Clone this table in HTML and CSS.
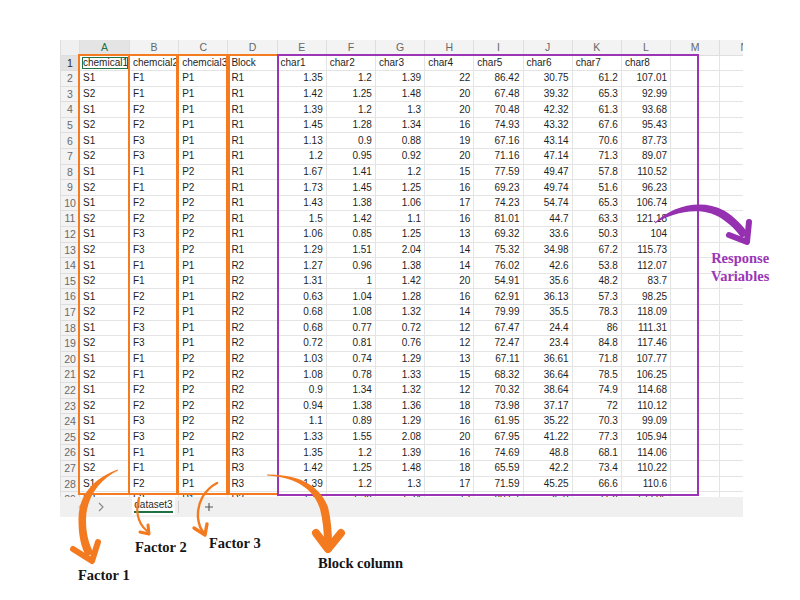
FILE: index.html
```html
<!DOCTYPE html>
<html lang="en">
<head>
<meta charset="utf-8">
<title>dataset3</title>
<link rel="stylesheet" href="styles.css">
</head>
<body>
<div class="sheet">
  <div class="grid-wrap">
    <table class="grid">
      <colgroup>
        <col class="c-rh"><col class="c-a"><col><col><col><col><col><col><col><col><col><col><col><col><col>
      </colgroup>
      <thead>
        <tr><th class="corner"></th><th class="csel">A</th><th>B</th><th>C</th><th>D</th><th>E</th><th>F</th><th>G</th><th>H</th><th>I</th><th>J</th><th>K</th><th>L</th><th>M</th><th>N</th></tr>
      </thead>
      <tbody>
        <tr class="r1"><th>1</th><td class="sel">chemical1</td><td>chemcial2</td><td>chemcial3</td><td>Block</td><td>char1</td><td>char2</td><td>char3</td><td>char4</td><td>char5</td><td>char6</td><td>char7</td><td>char8</td><td></td><td></td></tr>
        <tr><th>2</th><td>S1</td><td>F1</td><td>P1</td><td>R1</td><td>1.35</td><td>1.2</td><td>1.39</td><td>22</td><td>86.42</td><td>30.75</td><td>61.2</td><td>107.01</td><td></td><td></td></tr>
        <tr><th>3</th><td>S2</td><td>F1</td><td>P1</td><td>R1</td><td>1.42</td><td>1.25</td><td>1.48</td><td>20</td><td>67.48</td><td>39.32</td><td>65.3</td><td>92.99</td><td></td><td></td></tr>
        <tr><th>4</th><td>S1</td><td>F2</td><td>P1</td><td>R1</td><td>1.39</td><td>1.2</td><td>1.3</td><td>20</td><td>70.48</td><td>42.32</td><td>61.3</td><td>93.68</td><td></td><td></td></tr>
        <tr><th>5</th><td>S2</td><td>F2</td><td>P1</td><td>R1</td><td>1.45</td><td>1.28</td><td>1.34</td><td>16</td><td>74.93</td><td>43.32</td><td>67.6</td><td>95.43</td><td></td><td></td></tr>
        <tr><th>6</th><td>S1</td><td>F3</td><td>P1</td><td>R1</td><td>1.13</td><td>0.9</td><td>0.88</td><td>19</td><td>67.16</td><td>43.14</td><td>70.6</td><td>87.73</td><td></td><td></td></tr>
        <tr><th>7</th><td>S2</td><td>F3</td><td>P1</td><td>R1</td><td>1.2</td><td>0.95</td><td>0.92</td><td>20</td><td>71.16</td><td>47.14</td><td>71.3</td><td>89.07</td><td></td><td></td></tr>
        <tr><th>8</th><td>S1</td><td>F1</td><td>P2</td><td>R1</td><td>1.67</td><td>1.41</td><td>1.2</td><td>15</td><td>77.59</td><td>49.47</td><td>57.8</td><td>110.52</td><td></td><td></td></tr>
        <tr><th>9</th><td>S2</td><td>F1</td><td>P2</td><td>R1</td><td>1.73</td><td>1.45</td><td>1.25</td><td>16</td><td>69.23</td><td>49.74</td><td>51.6</td><td>96.23</td><td></td><td></td></tr>
        <tr><th>10</th><td>S1</td><td>F2</td><td>P2</td><td>R1</td><td>1.43</td><td>1.38</td><td>1.06</td><td>17</td><td>74.23</td><td>54.74</td><td>65.3</td><td>106.74</td><td></td><td></td></tr>
        <tr><th>11</th><td>S2</td><td>F2</td><td>P2</td><td>R1</td><td>1.5</td><td>1.42</td><td>1.1</td><td>16</td><td>81.01</td><td>44.7</td><td>63.3</td><td>121.18</td><td></td><td></td></tr>
        <tr><th>12</th><td>S1</td><td>F3</td><td>P2</td><td>R1</td><td>1.06</td><td>0.85</td><td>1.25</td><td>13</td><td>69.32</td><td>33.6</td><td>50.3</td><td>104</td><td></td><td></td></tr>
        <tr><th>13</th><td>S2</td><td>F3</td><td>P2</td><td>R1</td><td>1.29</td><td>1.51</td><td>2.04</td><td>14</td><td>75.32</td><td>34.98</td><td>67.2</td><td>115.73</td><td></td><td></td></tr>
        <tr><th>14</th><td>S1</td><td>F1</td><td>P1</td><td>R2</td><td>1.27</td><td>0.96</td><td>1.38</td><td>14</td><td>76.02</td><td>42.6</td><td>53.8</td><td>112.07</td><td></td><td></td></tr>
        <tr><th>15</th><td>S2</td><td>F1</td><td>P1</td><td>R2</td><td>1.31</td><td>1</td><td>1.42</td><td>20</td><td>54.91</td><td>35.6</td><td>48.2</td><td>83.7</td><td></td><td></td></tr>
        <tr><th>16</th><td>S1</td><td>F2</td><td>P1</td><td>R2</td><td>0.63</td><td>1.04</td><td>1.28</td><td>16</td><td>62.91</td><td>36.13</td><td>57.3</td><td>98.25</td><td></td><td></td></tr>
        <tr><th>17</th><td>S2</td><td>F2</td><td>P1</td><td>R2</td><td>0.68</td><td>1.08</td><td>1.32</td><td>14</td><td>79.99</td><td>35.5</td><td>78.3</td><td>118.09</td><td></td><td></td></tr>
        <tr><th>18</th><td>S1</td><td>F3</td><td>P1</td><td>R2</td><td>0.68</td><td>0.77</td><td>0.72</td><td>12</td><td>67.47</td><td>24.4</td><td>86</td><td>111.31</td><td></td><td></td></tr>
        <tr><th>19</th><td>S2</td><td>F3</td><td>P1</td><td>R2</td><td>0.72</td><td>0.81</td><td>0.76</td><td>12</td><td>72.47</td><td>23.4</td><td>84.8</td><td>117.46</td><td></td><td></td></tr>
        <tr><th>20</th><td>S1</td><td>F1</td><td>P2</td><td>R2</td><td>1.03</td><td>0.74</td><td>1.29</td><td>13</td><td>67.11</td><td>36.61</td><td>71.8</td><td>107.77</td><td></td><td></td></tr>
        <tr><th>21</th><td>S2</td><td>F1</td><td>P2</td><td>R2</td><td>1.08</td><td>0.78</td><td>1.33</td><td>15</td><td>68.32</td><td>36.64</td><td>78.5</td><td>106.25</td><td></td><td></td></tr>
        <tr><th>22</th><td>S1</td><td>F2</td><td>P2</td><td>R2</td><td>0.9</td><td>1.34</td><td>1.32</td><td>12</td><td>70.32</td><td>38.64</td><td>74.9</td><td>114.68</td><td></td><td></td></tr>
        <tr><th>23</th><td>S2</td><td>F2</td><td>P2</td><td>R2</td><td>0.94</td><td>1.38</td><td>1.36</td><td>18</td><td>73.98</td><td>37.17</td><td>72</td><td>110.12</td><td></td><td></td></tr>
        <tr><th>24</th><td>S1</td><td>F3</td><td>P2</td><td>R2</td><td>1.1</td><td>0.89</td><td>1.29</td><td>16</td><td>61.95</td><td>35.22</td><td>70.3</td><td>99.09</td><td></td><td></td></tr>
        <tr><th>25</th><td>S2</td><td>F3</td><td>P2</td><td>R2</td><td>1.33</td><td>1.55</td><td>2.08</td><td>20</td><td>67.95</td><td>41.22</td><td>77.3</td><td>105.94</td><td></td><td></td></tr>
        <tr><th>26</th><td>S1</td><td>F1</td><td>P1</td><td>R3</td><td>1.35</td><td>1.2</td><td>1.39</td><td>16</td><td>74.69</td><td>48.8</td><td>68.1</td><td>114.06</td><td></td><td></td></tr>
        <tr><th>27</th><td>S2</td><td>F1</td><td>P1</td><td>R3</td><td>1.42</td><td>1.25</td><td>1.48</td><td>18</td><td>65.59</td><td>42.2</td><td>73.4</td><td>110.22</td><td></td><td></td></tr>
        <tr><th>28</th><td>S1</td><td>F2</td><td>P1</td><td>R3</td><td>1.39</td><td>1.2</td><td>1.3</td><td>17</td><td>71.59</td><td>45.25</td><td>66.6</td><td>110.6</td><td></td><td></td></tr>
        <tr><th>29</th><td>S2</td><td>F2</td><td>P1</td><td>R3</td><td>1.45</td><td>1.28</td><td>1.34</td><td>13</td><td>80.57</td><td>35.9</td><td>71.8</td><td>122.05</td><td></td><td></td></tr>
      </tbody>
    </table>
    <div class="box box-a"></div>
    <div class="box box-b"></div>
    <div class="box box-c"></div>
    <div class="box box-d"></div>
    <div class="box box-resp"></div>
  </div>
  <div class="tabs">
    <span class="nav"><svg width="8" height="10" viewBox="0 0 8 10"><path d="M6 1 L2 5 L6 9" fill="none" stroke="#c9c9c9" stroke-width="1.2"/></svg></span>
    <span class="nav"><svg width="8" height="10" viewBox="0 0 8 10"><path d="M2 1 L6 5 L2 9" fill="none" stroke="#8a8a8a" stroke-width="1.2"/></svg></span>
    <span class="tab"><span class="tab-name">dataset3</span></span>
    <span class="sep"></span>
    <span class="add"><svg width="10" height="10" viewBox="0 0 10 10"><path d="M5 1 V9 M1 5 H9" stroke="#555" stroke-width="1.1"/></svg></span>
  </div>
</div>

<div class="notes">
  <svg class="arrows" width="800" height="600" viewBox="0 0 800 600">
    <g fill="#f47a1f" stroke="none">
      <path d="M118,469.5 C96,477 78,494 78.5,520 C78.5,536 81,547 86.5,557 L93.5,553 C89,544 86,534 86,520 C86,497 100,479 118,470.5 Z"/>
      <path d="M267,474.5 C302,474 321,488 328,507 C331,519 332,532 332,545 L324,545 C324,532 323,521 320,509 C315,492 299,477 267,475.5 Z"/>
    </g>
    <g fill="none" stroke="#f47a1f" stroke-linecap="round" stroke-linejoin="round">
      <path d="M73,549 L92,561 L98,542" stroke-width="6"/>
      <path d="M139,498 C136,508 136,522 147,531" stroke-width="2.2"/>
      <path d="M140,532 L149,534 L148,525" stroke-width="3"/>
      <path d="M217,483 C204,490 197,503 198,518 C199,526 201,530 204,533" stroke-width="2.4"/>
      <path d="M194,528 L205,535 L207,524" stroke-width="3.4"/>
      <path d="M316,533 L328,549 L341,533" stroke-width="8"/>
    </g>
    <path fill="#9531b1" d="M655,222.5 C671,207 700,198 724,210.5 C735,217 743,226 748.5,234 L741.5,238 C737,231 730,224 720,217.5 C700,206 673,212 655,223.5 Z"/>
    <path d="M729,235 L747,242 L749,222" fill="none" stroke="#9531b1" stroke-width="6" stroke-linecap="round" stroke-linejoin="round"/>
  </svg>
  <span class="label f1">Factor 1</span>
  <span class="label f2">Factor 2</span>
  <span class="label f3">Factor 3</span>
  <span class="label blk">Block column</span>
  <div class="label resp">Response<br>Variables</div>
</div>
</body>
</html>
```

FILE: styles.css
```css
* { box-sizing: border-box; }

body {
  margin: 0;
  width: 800px;
  height: 600px;
  overflow: hidden;
  position: relative;
  background: #ffffff;
  font-family: "Liberation Sans", Arial, sans-serif;
}

.sheet {
  margin: 40px 0 0 60px;
  width: 683px;
}

.grid-wrap {
  position: relative;
  height: 457px;
  overflow: hidden;
}

.grid {
  border-collapse: collapse;
  table-layout: fixed;
  width: 709px;
  font-size: 10px;
  color: #1f1f1f;
}

.grid col { width: 49.2px; }
.grid col.c-rh { width: 19px; }
.grid col.c-a { width: 50px; }

.grid thead tr { height: 15px; }
.grid tbody tr { height: 15.6px; }

.grid th,
.grid td {
  border: 1px solid #e4e4e4;
  padding: 0 3px;
  line-height: 1;
  white-space: nowrap;
  overflow: hidden;
  vertical-align: middle;
}

.grid thead th {
  background: #f3f3f3;
  color: #676767;
  font-weight: normal;
  font-size: 10.5px;
  text-align: center;
  border-color: #dedede;
  border-top: none;
}

.grid thead th.corner { background: #f0f0f0; }

.grid thead th.csel {
  background: #e4e4e4;
  color: #217346;
  border-bottom: 2px solid #217346;
}

.grid tbody th {
  background: #f3f3f3;
  color: #6a6a6a;
  font-weight: normal;
  font-size: 10.5px;
  text-align: center;
  padding: 0;
  border-color: #dedede;
}

.grid tbody tr.r1 th {
  background: #e2e2e2;
  color: #2a2a2a;
}

.grid tbody td:nth-child(n+6) { text-align: right; }
.grid tbody tr.r1 td { text-align: left; }

.grid td.sel {
  outline: 1.5px solid #217346;
  outline-offset: -3px;
}

.box {
  position: absolute;
  top: 14px;
  height: 441px;
  border: 2px solid #f47b20;
}
.box-a { left: 18px; width: 52px; }
.box-b { left: 68px; width: 50px; }
.box-c { left: 117px; width: 51px; }
.box-d { left: 168px; width: 51px; }
.box-resp {
  left: 217px;
  width: 422px;
  height: 442px;
  border-color: #9b35b6;
}

.tabs {
  height: 20px;
  background: #f0f0f0;
  display: flex;
  align-items: center;
  padding-left: 15px;
  font-size: 10px;
  color: #2a2a2a;
}

.nav {
  width: 12px;
  margin-right: 8px;
  display: flex;
  justify-content: center;
}

.tab {
  margin-left: 17px;
  width: 43px;
  height: 18px;
  align-self: flex-start;
  background: #ffffff;
  display: flex;
  align-items: center;
  justify-content: center;
}

.tab-name {
  border-bottom: 2px solid #1e7145;
  padding-bottom: 1px;
  line-height: 11px;
}

.sep {
  margin-left: 3px;
  width: 1px;
  height: 12px;
  background: #d0d0d0;
}

.add {
  margin-left: 25px;
  display: flex;
}

.notes {
  position: absolute;
  left: 0;
  top: 0;
  width: 800px;
  height: 600px;
  pointer-events: none;
}

.arrows {
  position: absolute;
  left: 0;
  top: 0;
}

.label {
  position: absolute;
  font-family: "Liberation Serif", "Times New Roman", serif;
  font-weight: bold;
  font-size: 14.5px;
  line-height: 16px;
  color: #151515;
  white-space: nowrap;
}

.f1 { left: 78px; top: 567px; }
.f2 { left: 135px; top: 539px; }
.f3 { left: 209px; top: 535px; }
.blk { left: 318px; top: 555px; }

.resp {
  left: 711px;
  top: 249px;
  line-height: 18px;
  text-align: center;
  color: #9a36b6;
}
```
